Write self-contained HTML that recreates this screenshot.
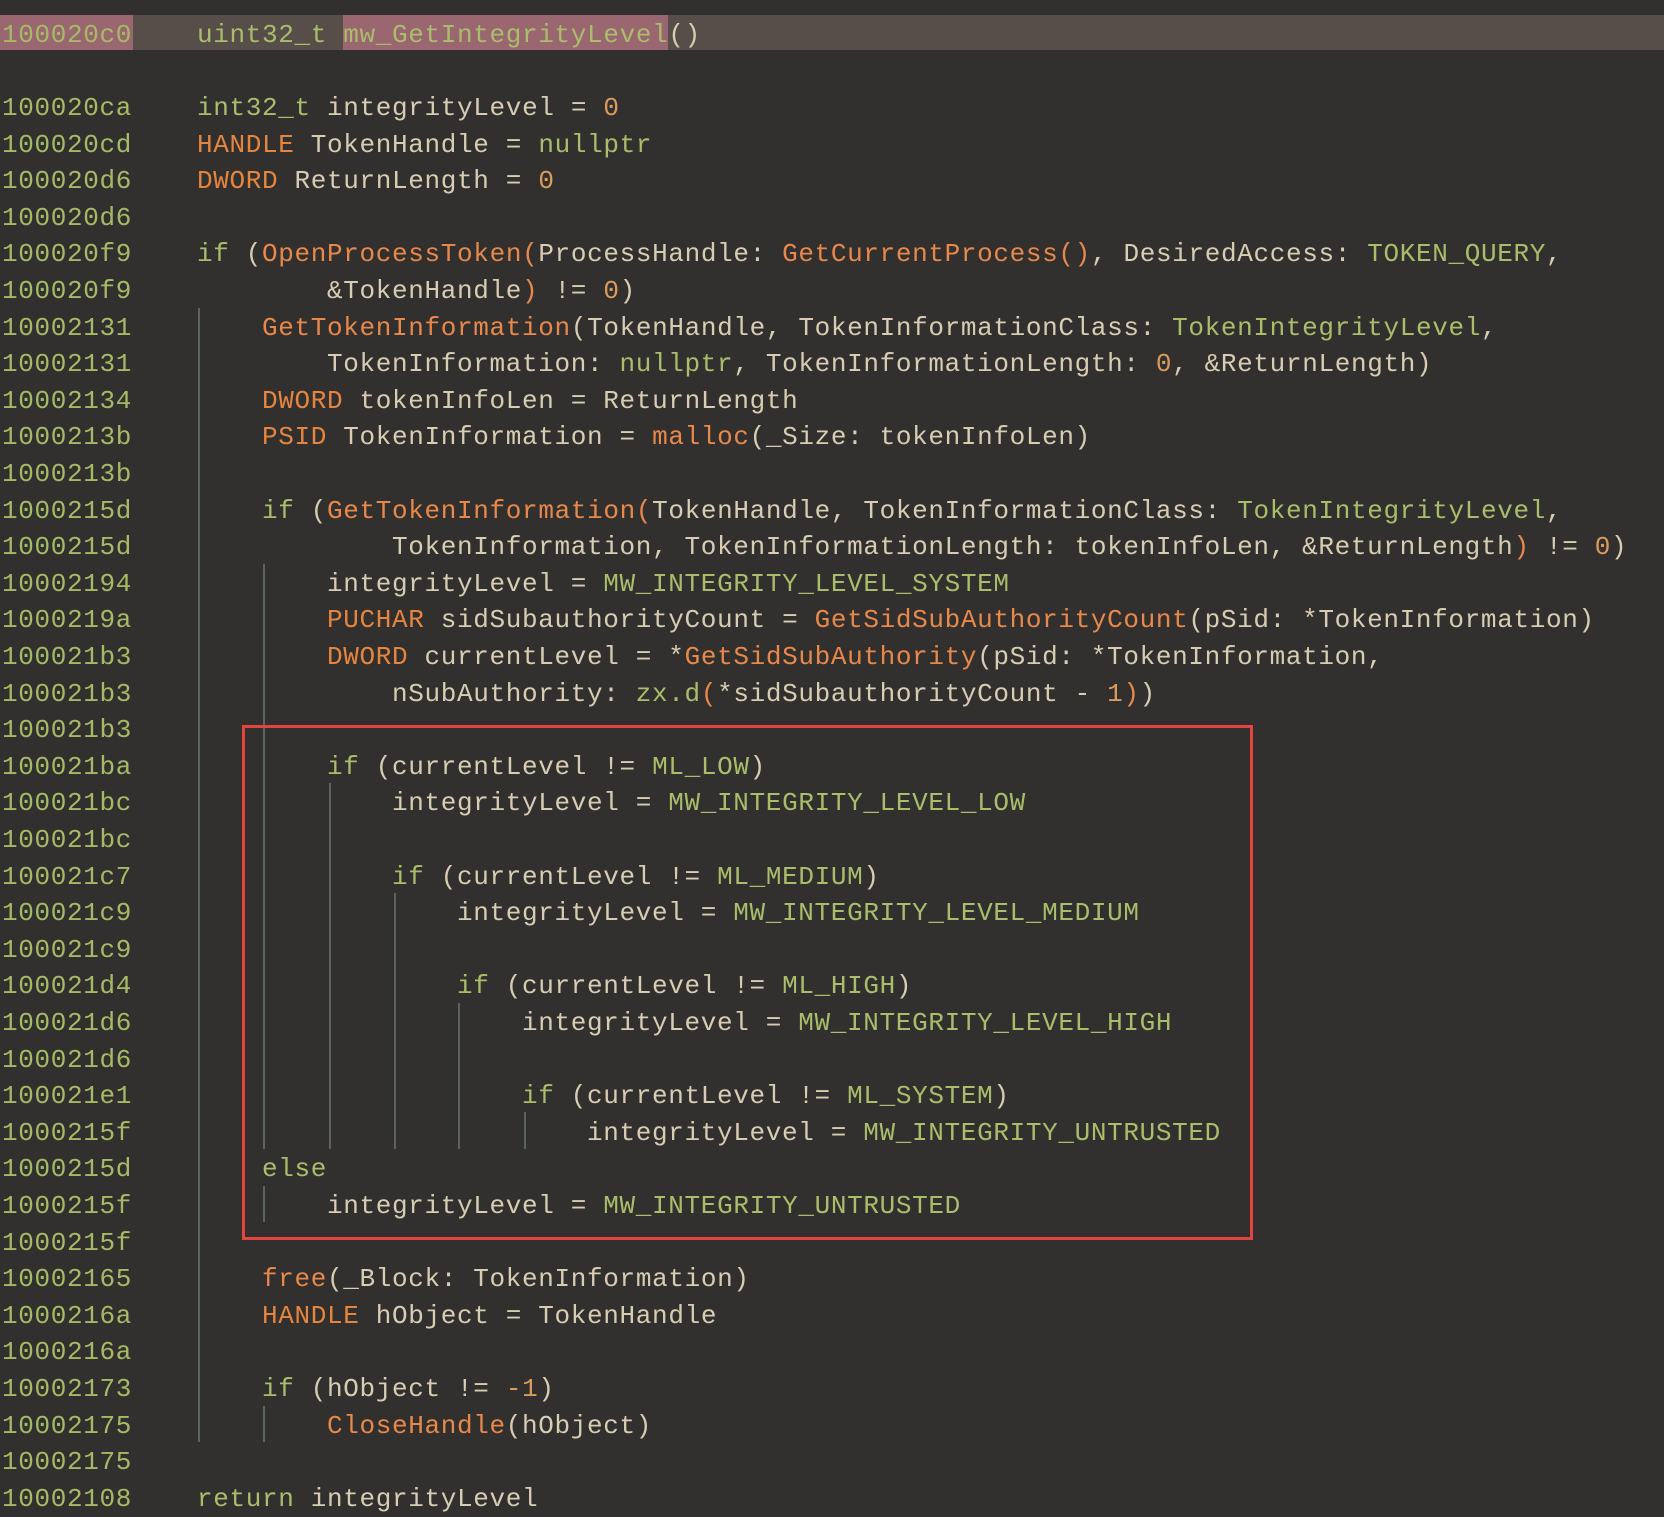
<!DOCTYPE html>
<html><head><meta charset="utf-8"><style>
html,body{margin:0;padding:0;background:#31302e;width:1664px;height:1517px;overflow:hidden}
body{position:relative;font-family:"Liberation Mono",monospace;font-size:26px;letter-spacing:0.65px}
.l{position:absolute;left:0;height:36.6px;line-height:36.6px;white-space:pre;color:#d8cdb3;margin-top:2px}
.a{position:absolute;left:2px;color:#a6ba66}
.c{position:absolute}
.k{color:#e5853f}.f{color:#e8884a}.g{color:#a9bd6b}.n{color:#dc9b5c}
.v{position:absolute;width:1.5px;background:#5c6460}
#hdr{position:absolute;left:0;top:15px;width:1664px;height:35px;background:#574e4a}
#box{position:absolute;left:242px;top:725px;width:1011px;height:515px;border:3px solid #e2453d;box-sizing:border-box}
</style></head><body>
<div id="hdr"></div>
<div style="position:absolute;left:0;top:15px;width:133px;height:35px;background:#9a6670"></div>
<div style="position:absolute;left:343px;top:15px;width:325px;height:35px;background:#9a6670"></div>

<div class="v" style="left:198px;top:308px;height:1134px"></div>
<div class="v" style="left:263px;top:564px;height:585px"></div>
<div class="v" style="left:263px;top:1186px;height:36px"></div>
<div class="v" style="left:263px;top:1406px;height:36px"></div>
<div class="v" style="left:329px;top:783px;height:366px"></div>
<div class="v" style="left:394px;top:893px;height:256px"></div>
<div class="v" style="left:458px;top:1003px;height:146px"></div>
<div class="v" style="left:524px;top:1112px;height:37px"></div>
<div id="box"></div>

<div class="l" style="top:14.7px"><span class="a">100020c0</span><span class="c" style="left:197px"><span class="g">uint32_t mw_GetIntegrityLevel</span>()</span></div>
<div class="l" style="top:87.9px"><span class="a">100020ca</span><span class="c" style="left:197px"><span class="g">int32_t</span> integrityLevel = <span class="n">0</span></span></div>
<div class="l" style="top:124.5px"><span class="a">100020cd</span><span class="c" style="left:197px"><span class="k">HANDLE</span> TokenHandle = <span class="g">nullptr</span></span></div>
<div class="l" style="top:161.1px"><span class="a">100020d6</span><span class="c" style="left:197px"><span class="k">DWORD</span> ReturnLength = <span class="n">0</span></span></div>
<div class="l" style="top:197.7px"><span class="a">100020d6</span></div>
<div class="l" style="top:234.3px"><span class="a">100020f9</span><span class="c" style="left:197px"><span class="g">if</span> (<span class="f">OpenProcessToken(</span>ProcessHandle: <span class="f">GetCurrentProcess()</span>, DesiredAccess: <span class="g">TOKEN_QUERY</span>,</span></div>
<div class="l" style="top:270.9px"><span class="a">100020f9</span><span class="c" style="left:327px">&amp;TokenHandle<span class="f">)</span> != <span class="n">0</span>)</span></div>
<div class="l" style="top:307.5px"><span class="a">10002131</span><span class="c" style="left:262px"><span class="f">GetTokenInformation</span>(TokenHandle, TokenInformationClass: <span class="g">TokenIntegrityLevel</span>,</span></div>
<div class="l" style="top:344.1px"><span class="a">10002131</span><span class="c" style="left:327px">TokenInformation: <span class="g">nullptr</span>, TokenInformationLength: <span class="n">0</span>, &amp;ReturnLength)</span></div>
<div class="l" style="top:380.7px"><span class="a">10002134</span><span class="c" style="left:262px"><span class="k">DWORD</span> tokenInfoLen = ReturnLength</span></div>
<div class="l" style="top:417.3px"><span class="a">1000213b</span><span class="c" style="left:262px"><span class="k">PSID</span> TokenInformation = <span class="f">malloc</span>(_Size: tokenInfoLen)</span></div>
<div class="l" style="top:453.9px"><span class="a">1000213b</span></div>
<div class="l" style="top:490.5px"><span class="a">1000215d</span><span class="c" style="left:262px"><span class="g">if</span> (<span class="f">GetTokenInformation(</span>TokenHandle, TokenInformationClass: <span class="g">TokenIntegrityLevel</span>,</span></div>
<div class="l" style="top:527.1px"><span class="a">1000215d</span><span class="c" style="left:392px">TokenInformation, TokenInformationLength: tokenInfoLen, &amp;ReturnLength<span class="f">)</span> != <span class="n">0</span>)</span></div>
<div class="l" style="top:563.7px"><span class="a">10002194</span><span class="c" style="left:327px">integrityLevel = <span class="g">MW_INTEGRITY_LEVEL_SYSTEM</span></span></div>
<div class="l" style="top:600.3px"><span class="a">1000219a</span><span class="c" style="left:327px"><span class="k">PUCHAR</span> sidSubauthorityCount = <span class="f">GetSidSubAuthorityCount</span>(pSid: *TokenInformation)</span></div>
<div class="l" style="top:636.9px"><span class="a">100021b3</span><span class="c" style="left:327px"><span class="k">DWORD</span> currentLevel = *<span class="f">GetSidSubAuthority</span>(pSid: *TokenInformation,</span></div>
<div class="l" style="top:673.5px"><span class="a">100021b3</span><span class="c" style="left:392px">nSubAuthority: <span class="g">zx.d</span><span class="f">(</span>*sidSubauthorityCount - <span class="n">1</span><span class="f">)</span>)</span></div>
<div class="l" style="top:710.1px"><span class="a">100021b3</span></div>
<div class="l" style="top:746.7px"><span class="a">100021ba</span><span class="c" style="left:327px"><span class="g">if</span> (currentLevel != <span class="g">ML_LOW</span>)</span></div>
<div class="l" style="top:783.3px"><span class="a">100021bc</span><span class="c" style="left:392px">integrityLevel = <span class="g">MW_INTEGRITY_LEVEL_LOW</span></span></div>
<div class="l" style="top:819.9px"><span class="a">100021bc</span></div>
<div class="l" style="top:856.5px"><span class="a">100021c7</span><span class="c" style="left:392px"><span class="g">if</span> (currentLevel != <span class="g">ML_MEDIUM</span>)</span></div>
<div class="l" style="top:893.1px"><span class="a">100021c9</span><span class="c" style="left:457px">integrityLevel = <span class="g">MW_INTEGRITY_LEVEL_MEDIUM</span></span></div>
<div class="l" style="top:929.7px"><span class="a">100021c9</span></div>
<div class="l" style="top:966.3px"><span class="a">100021d4</span><span class="c" style="left:457px"><span class="g">if</span> (currentLevel != <span class="g">ML_HIGH</span>)</span></div>
<div class="l" style="top:1002.9px"><span class="a">100021d6</span><span class="c" style="left:522px">integrityLevel = <span class="g">MW_INTEGRITY_LEVEL_HIGH</span></span></div>
<div class="l" style="top:1039.5px"><span class="a">100021d6</span></div>
<div class="l" style="top:1076.1px"><span class="a">100021e1</span><span class="c" style="left:522px"><span class="g">if</span> (currentLevel != <span class="g">ML_SYSTEM</span>)</span></div>
<div class="l" style="top:1112.7px"><span class="a">1000215f</span><span class="c" style="left:587px">integrityLevel = <span class="g">MW_INTEGRITY_UNTRUSTED</span></span></div>
<div class="l" style="top:1149.3px"><span class="a">1000215d</span><span class="c" style="left:262px"><span class="g">else</span></span></div>
<div class="l" style="top:1185.9px"><span class="a">1000215f</span><span class="c" style="left:327px">integrityLevel = <span class="g">MW_INTEGRITY_UNTRUSTED</span></span></div>
<div class="l" style="top:1222.5px"><span class="a">1000215f</span></div>
<div class="l" style="top:1259.1px"><span class="a">10002165</span><span class="c" style="left:262px"><span class="f">free</span>(_Block: TokenInformation)</span></div>
<div class="l" style="top:1295.7px"><span class="a">1000216a</span><span class="c" style="left:262px"><span class="k">HANDLE</span> hObject = TokenHandle</span></div>
<div class="l" style="top:1332.3px"><span class="a">1000216a</span></div>
<div class="l" style="top:1368.9px"><span class="a">10002173</span><span class="c" style="left:262px"><span class="g">if</span> (hObject != <span class="n">-1</span>)</span></div>
<div class="l" style="top:1405.5px"><span class="a">10002175</span><span class="c" style="left:327px"><span class="f">CloseHandle</span>(hObject)</span></div>
<div class="l" style="top:1442.1px"><span class="a">10002175</span></div>
<div class="l" style="top:1478.7px"><span class="a">10002108</span><span class="c" style="left:197px"><span class="g">return</span> integrityLevel</span></div>
</body></html>
